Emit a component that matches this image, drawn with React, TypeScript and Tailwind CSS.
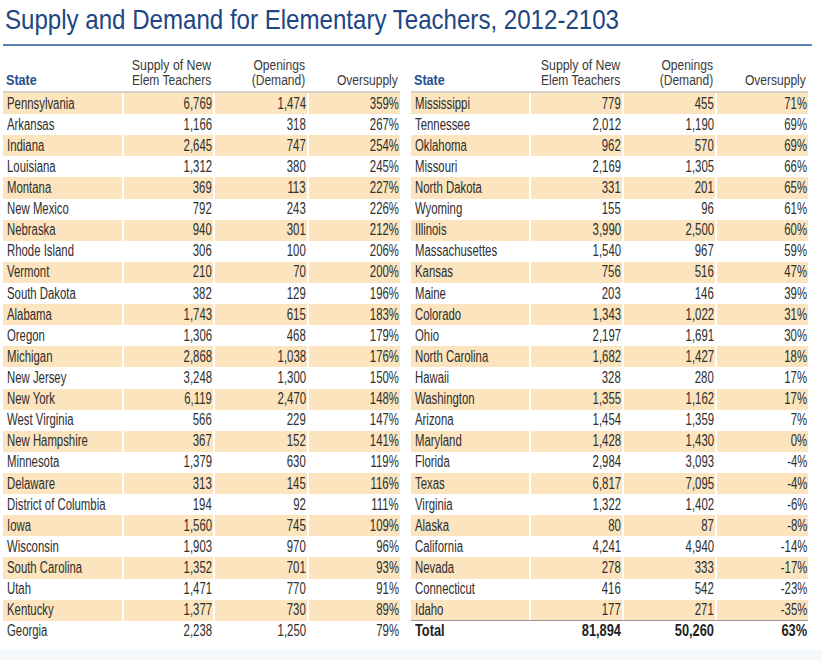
type Row = [string, string, string, string];

const left: Row[] = [
  ["Pennsylvania", "6,769", "1,474", "359%"],
  ["Arkansas", "1,166", "318", "267%"],
  ["Indiana", "2,645", "747", "254%"],
  ["Louisiana", "1,312", "380", "245%"],
  ["Montana", "369", "113", "227%"],
  ["New Mexico", "792", "243", "226%"],
  ["Nebraska", "940", "301", "212%"],
  ["Rhode Island", "306", "100", "206%"],
  ["Vermont", "210", "70", "200%"],
  ["South Dakota", "382", "129", "196%"],
  ["Alabama", "1,743", "615", "183%"],
  ["Oregon", "1,306", "468", "179%"],
  ["Michigan", "2,868", "1,038", "176%"],
  ["New Jersey", "3,248", "1,300", "150%"],
  ["New York", "6,119", "2,470", "148%"],
  ["West Virginia", "566", "229", "147%"],
  ["New Hampshire", "367", "152", "141%"],
  ["Minnesota", "1,379", "630", "119%"],
  ["Delaware", "313", "145", "116%"],
  ["District of Columbia", "194", "92", "111%"],
  ["Iowa", "1,560", "745", "109%"],
  ["Wisconsin", "1,903", "970", "96%"],
  ["South Carolina", "1,352", "701", "93%"],
  ["Utah", "1,471", "770", "91%"],
  ["Kentucky", "1,377", "730", "89%"],
  ["Georgia", "2,238", "1,250", "79%"],
];

const right: Row[] = [
  ["Mississippi", "779", "455", "71%"],
  ["Tennessee", "2,012", "1,190", "69%"],
  ["Oklahoma", "962", "570", "69%"],
  ["Missouri", "2,169", "1,305", "66%"],
  ["North Dakota", "331", "201", "65%"],
  ["Wyoming", "155", "96", "61%"],
  ["Illinois", "3,990", "2,500", "60%"],
  ["Massachusettes", "1,540", "967", "59%"],
  ["Kansas", "756", "516", "47%"],
  ["Maine", "203", "146", "39%"],
  ["Colorado", "1,343", "1,022", "31%"],
  ["Ohio", "2,197", "1,691", "30%"],
  ["North Carolina", "1,682", "1,427", "18%"],
  ["Hawaii", "328", "280", "17%"],
  ["Washington", "1,355", "1,162", "17%"],
  ["Arizona", "1,454", "1,359", "7%"],
  ["Maryland", "1,428", "1,430", "0%"],
  ["Florida", "2,984", "3,093", "-4%"],
  ["Texas", "6,817", "7,095", "-4%"],
  ["Virginia", "1,322", "1,402", "-6%"],
  ["Alaska", "80", "87", "-8%"],
  ["California", "4,241", "4,940", "-14%"],
  ["Nevada", "278", "333", "-17%"],
  ["Connecticut", "416", "542", "-23%"],
  ["Idaho", "177", "271", "-35%"],
];

// widths of the four columns for each half
const leftCols = [119, 89, 92, 91];
const rightCols = [118, 91, 91, 91];

function Header({ cols }: { cols: number[] }) {
  return (
    <div className="flex items-end gap-[2px] h-[47px] border-b-[2px] border-[#d6d2ca] text-[14px] leading-[14px] text-[#3a3a3a]">
      <div style={{ width: cols[0] }} className="pl-[3px] pb-[4px]">
        <span className="inline-block whitespace-nowrap origin-left scale-x-[0.84] font-bold text-[15px] text-[#1f4f8f]">
          State
        </span>
      </div>
      <div style={{ width: cols[1] }} className="flex flex-col items-end pr-[2px] pb-[4px]">
        <span className="inline-block whitespace-nowrap origin-right scale-x-[0.88] leading-[13px]">Supply of New</span>
        <span className="inline-block whitespace-nowrap origin-right scale-x-[0.86] mt-[1px]">Elem Teachers</span>
      </div>
      <div style={{ width: cols[2] }} className="flex flex-col items-end pr-[2px] pb-[4px]">
        <span className="inline-block whitespace-nowrap origin-right scale-x-[0.86] leading-[13px]">Openings</span>
        <span className="inline-block whitespace-nowrap origin-right scale-x-[0.86] mt-[1px]">(Demand)</span>
      </div>
      <div style={{ width: cols[3] }} className="flex flex-col items-end pr-[2px] pb-[4px]">
        <span className="inline-block whitespace-nowrap origin-right scale-x-[0.86]">Oversupply</span>
      </div>
    </div>
  );
}

function DataRow({ row, cols, shaded, bold }: { row: Row; cols: number[]; shaded: boolean; bold?: boolean }) {
  const cell = shaded ? "bg-[#fbe4be]" : "";
  const sx = bold ? "scale-x-[0.8]" : "scale-x-[0.71]";
  return (
    <div
      className={`flex h-[21.12px] gap-[2px] text-[16px] ${
        bold ? "font-bold text-[#1e1e1e]" : "text-[#2e2e2e]"
      }`}
    >
      <div style={{ width: cols[0] }} className={`h-full flex items-center pl-[4px] ${cell}`}>
        <span className={`inline-block whitespace-nowrap origin-left ${sx}`}>{row[0]}</span>
      </div>
      {[1, 2, 3].map((c) => (
        <div key={c} style={{ width: cols[c] }} className={`h-full flex items-center justify-end pr-[1px] ${cell}`}>
          <span className={`inline-block whitespace-nowrap origin-right ${sx}`}>{row[c]}</span>
        </div>
      ))}
    </div>
  );
}

function Table({ rows, cols, total }: { rows: Row[]; cols: number[]; total?: Row }) {
  return (
    <div className="flex flex-col">
      <Header cols={cols} />
      {rows.map((r, i) => (
        <DataRow key={r[0]} row={r} cols={cols} shaded={i % 2 === 0} />
      ))}
      {total && (
        <div className="border-t border-[#9a9a9a] -mt-[1px]">
          <DataRow row={total} cols={cols} shaded={false} bold />
        </div>
      )}
    </div>
  );
}

export default function App() {
  return (
    <div className="w-[822px] h-[661px] bg-white" style={{ fontFamily: '"Liberation Sans", Arial, sans-serif' }}>
      <div className="h-[44px] pl-[5px] pt-[2px]">
        <h1 className="inline-block whitespace-nowrap origin-left scale-x-[0.86] text-[28px] leading-[36px] text-[#1d4682]">
          Supply and Demand for Elementary Teachers, 2012-2103
        </h1>
      </div>
      <div className="ml-[3px] w-[809px] h-[2px] bg-[#5b80b6]" />
      <div className="flex pl-[3px] gap-[11px]">
        <Table rows={left} cols={leftCols} />
        <Table rows={right} cols={rightCols} total={["Total", "81,894", "50,260", "63%"]} />
      </div>
      <div className="mt-[8px] h-[10px] bg-[#f6f9fc]" />
    </div>
  );
}
